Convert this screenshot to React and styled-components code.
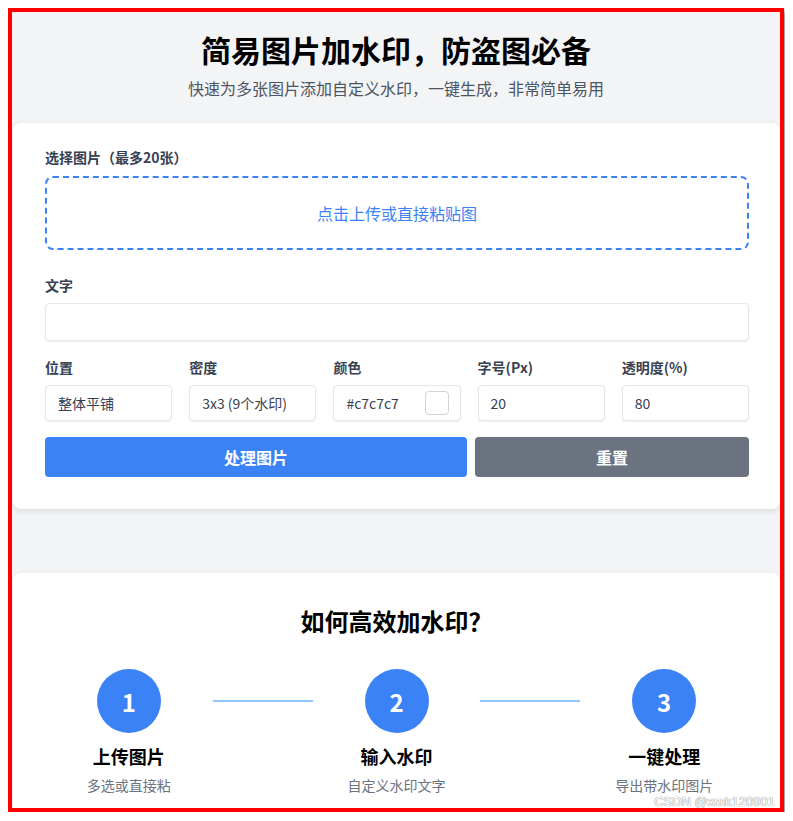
import styled, { createGlobalStyle } from "styled-components";

const GlobalStyle = createGlobalStyle`
  body {
    margin: 8px;
    background: #ffffff;
    font-family: "Noto Sans CJK SC", "Noto Sans", sans-serif;
  }
  * { box-sizing: border-box; }
`;

const Frame = styled.div`
  position: relative;
  width: 776px;
  height: 804px;
  border: 4px solid #ff0000;
  background: #f3f4f6;
  box-shadow: 3px 3px 4px rgba(0, 0, 0, 0.4);
  overflow: hidden;
`;

const Hero = styled.header`
  text-align: center;
  padding: 19px 0 23px;
`;

const Title = styled.h1`
  margin: 0;
  font-size: 30px;
  line-height: 36px;
  font-weight: 700;
  color: #000;
`;

const Subtitle = styled.p`
  margin: 9px 0 0;
  font-size: 16px;
  line-height: 24px;
  color: #4b5563;
`;

const Card = styled.section`
  background: #fff;
  margin-left: 1px;
  border-radius: ${({ $top }) => ($top ? "8px 8px 0 0" : "8px")};
  box-shadow: 0 2px 6px rgba(0, 0, 0, 0.1);
  padding: ${({ $pad }) => $pad || "24px 31px 32px 32px"};
  margin-bottom: ${({ $gap }) => $gap || "0"};
`;

const Label = styled.label`
  display: block;
  font-size: 14px;
  line-height: 20px;
  font-weight: 700;
  color: #374151;
  margin: ${({ $mt }) => $mt || "0"} 0 8px;
`;

const DropZone = styled.div`
  height: 74px;
  margin-top: 9px;
  border: 2px dashed #3b82f6;
  border-radius: 8px;
  display: flex;
  align-items: center;
  justify-content: center;
  color: #3b82f6;
  font-size: 16px;
`;

const Input = styled.div`
  height: ${({ $h }) => $h || "36px"};
  border: 1px solid #e5e7eb;
  border-radius: 4px;
  box-shadow: 0 1px 2px rgba(0, 0, 0, 0.08);
  padding: 0 12px;
  display: flex;
  align-items: center;
  justify-content: space-between;
  font-size: 14px;
  color: #374151;
  background: #fff;
`;

const Swatch = styled.span`
  width: 24px;
  height: 24px;
  border: 1px solid #d1d5db;
  border-radius: 4px;
  background: #fff;
  margin-right: -1px;
`;

const FieldRow = styled.div`
  display: grid;
  grid-template-columns: repeat(5, 1fr);
  gap: 17px;
  margin-top: 16px;
`;

const Actions = styled.div`
  display: flex;
  gap: 8px;
  margin-top: 16px;
`;

const Button = styled.button`
  flex: ${({ $grow }) => $grow} 1 0;
  min-width: 0;
  height: 40px;
  padding: 0;
  border: none;
  border-radius: 4px;
  background: ${({ $variant }) => ($variant === "gray" ? "#6b7280" : "#3b82f6")};
  color: #fff;
  font-family: inherit;
  font-size: 16px;
  font-weight: 700;
`;

const SectionTitle = styled.h2`
  margin: 0;
  text-align: center;
  font-size: 24px;
  line-height: 32px;
  font-weight: 700;
  color: #000;
`;

const Steps = styled.div`
  display: flex;
  align-items: flex-start;
  margin-top: 32px;
`;

const Step = styled.div`
  flex: 1;
  display: flex;
  flex-direction: column;
  align-items: center;
`;

const Circle = styled.div`
  width: 64px;
  height: 64px;
  border-radius: 50%;
  background: #3b82f6;
  color: #fff;
  font-size: 24px;
  font-weight: 700;
  display: flex;
  align-items: center;
  justify-content: center;
`;

const Connector = styled.div`
  width: 100px;
  height: 2px;
  margin-top: 31px;
  background: #93c5fd;
`;

const StepTitle = styled.div`
  margin-top: 10px;
  font-size: 18px;
  line-height: 26px;
  font-weight: 700;
  color: #000;
`;

const StepDesc = styled.div`
  margin-top: 6px;
  font-size: 14px;
  line-height: 20px;
  color: #6b7280;
`;

const Watermark = styled.span`
  position: absolute;
  right: 5px;
  bottom: -1px;
  font-family: "Liberation Sans", sans-serif;
  font-size: 13px;
  color: #fff;
  text-shadow: 0 0 1px #888, 0 0 1px #888;
`;

const fields = [
  { label: "位置", value: "整体平铺" },
  { label: "密度", value: "3x3 (9个水印)" },
  { label: "颜色", value: "#c7c7c7", swatch: true },
  { label: "字号(Px)", value: "20" },
  { label: "透明度(%)", value: "80" },
];

const steps = [
  { n: 1, title: "上传图片", desc: "多选或直接粘" },
  { n: 2, title: "输入水印", desc: "自定义水印文字" },
  { n: 3, title: "一键处理", desc: "导出带水印图片" },
];

export default function App() {
  return (
    <>
      <GlobalStyle />
      <Frame>
        <Hero>
          <Title>简易图片加水印，防盗图必备</Title>
          <Subtitle>快速为多张图片添加自定义水印，一键生成，非常简单易用</Subtitle>
        </Hero>

        <Card $gap="64px">
          <Label style={{ marginBottom: 0 }}>选择图片（最多20张）</Label>
          <DropZone>点击上传或直接粘贴图</DropZone>

          <Label $mt="25px">文字</Label>
          <Input $h="38px" />

          <FieldRow>
            {fields.map((f) => (
              <div key={f.label}>
                <Label>{f.label}</Label>
                <Input>
                  {f.value}
                  {f.swatch && <Swatch />}
                </Input>
              </div>
            ))}
          </FieldRow>

          <Actions>
            <Button $grow={422}>处理图片</Button>
            <Button $grow={274} $variant="gray">
              重置
            </Button>
          </Actions>
        </Card>

        <Card $top $pad="32px 32px 40px">
          <SectionTitle>如何高效加水印？</SectionTitle>
          <Steps>
            {steps.map((s, i) => (
              <>
                {i > 0 && <Connector key={`c${i}`} />}
                <Step key={s.n}>
                  <Circle>{s.n}</Circle>
                  <StepTitle>{s.title}</StepTitle>
                  <StepDesc>{s.desc}</StepDesc>
                </Step>
              </>
            ))}
          </Steps>
        </Card>

        <Watermark>CSDN @xmk120901</Watermark>
      </Frame>
    </>
  );
}
